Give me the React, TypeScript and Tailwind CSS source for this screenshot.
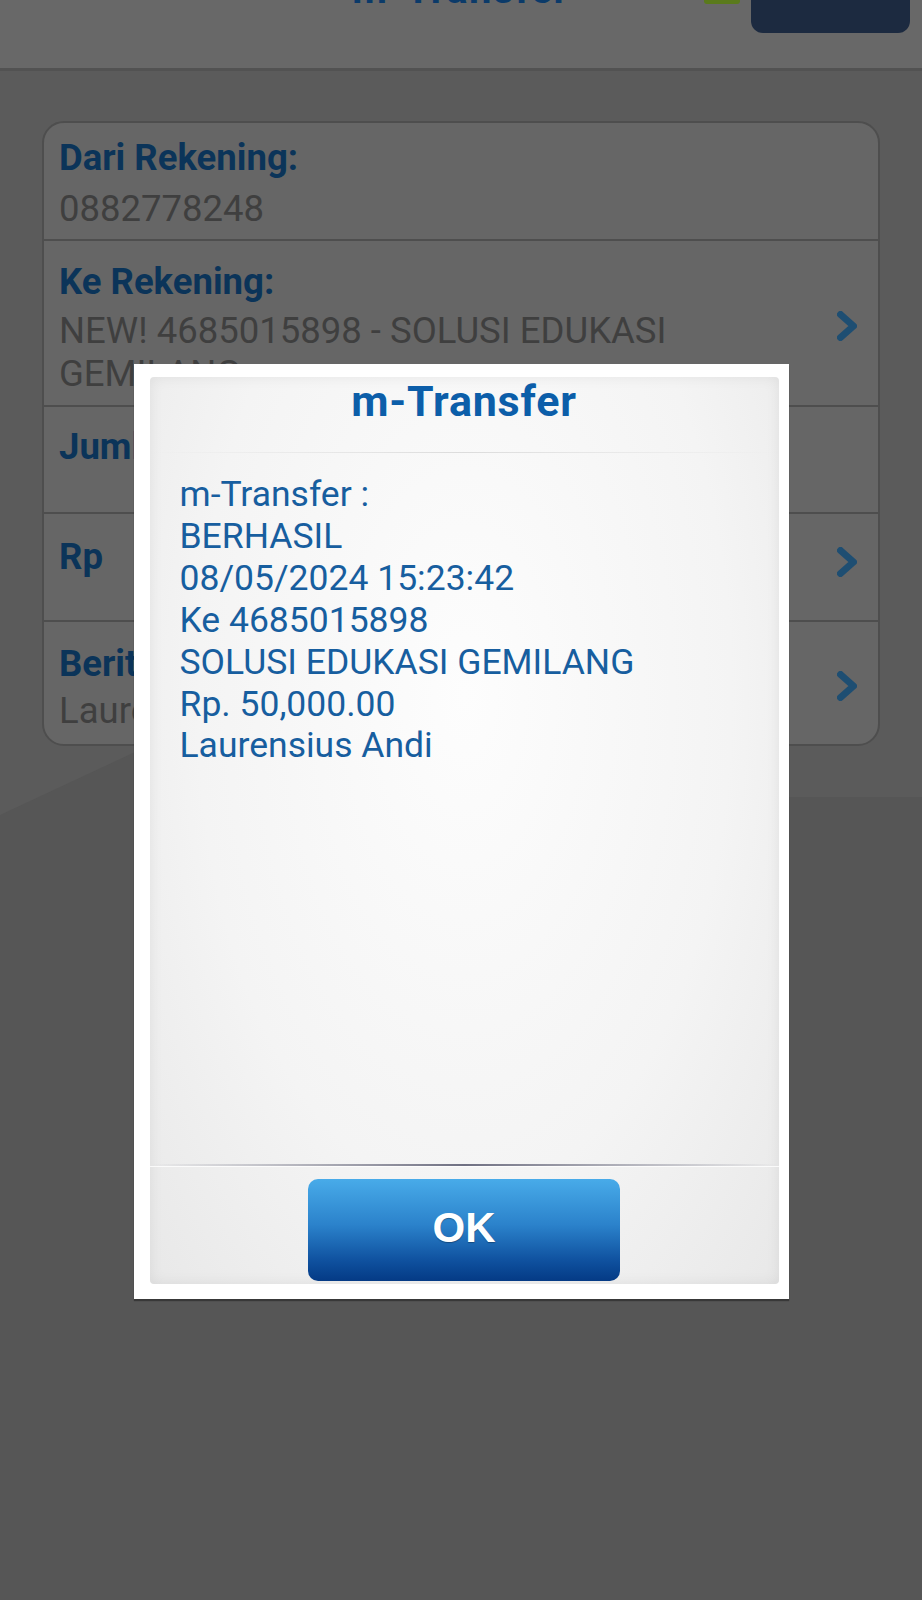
import type { ReactNode } from 'react';

const label = 'font-bold text-[36.5px] leading-[44px] text-[#0b3459]';
const value = 'text-[36.5px] leading-[43px] text-[#3f3f3f]';

const receipt = [
  'm-Transfer :',
  'BERHASIL',
  '08/05/2024 15:23:42',
  'Ke 4685015898',
  'SOLUSI EDUKASI GEMILANG',
  'Rp. 50,000.00',
  'Laurensius Andi',
];

function Chevron({ className = '' }: { className?: string }) {
  return (
    <svg
      width="20"
      height="30"
      viewBox="0 0 20 30"
      fill="none"
      stroke="#1e4e72"
      strokeWidth="7"
      strokeLinecap="round"
      strokeLinejoin="round"
      className={`shrink-0 ${className}`}
    >
      <polyline points="3.5,3.5 16.5,15 3.5,26.5" />
    </svg>
  );
}

function Row({
  height,
  pad,
  chevron,
  chevronClass,
  children,
}: {
  height: string;
  pad: string;
  chevron?: boolean;
  chevronClass?: string;
  children: ReactNode;
}) {
  return (
    <div className={`flex items-center pl-[15px] pr-[21px] ${height}`}>
      <div className={`flex-1 self-start ${pad}`}>{children}</div>
      {chevron && <Chevron className={chevronClass} />}
    </div>
  );
}

export default function App() {
  return (
    <div className="relative min-h-[1600px] overflow-hidden bg-[#5b5b5b] font-[Roboto,sans-serif]">
      {/* background wave */}
      <svg
        className="absolute left-0 top-0"
        width="922"
        height="1600"
        viewBox="0 0 922 1600"
      >
        <path
          d="M0 815 L150 745 C 320 680, 600 780, 788 797 L922 797 L922 1600 L0 1600 Z"
          fill="#565656"
        />
      </svg>

      <header className="relative flex h-[71px] items-start border-b-[3px] border-[#525252] bg-[#686868] px-[12px]">
        <div className="flex-1" />
        <h1 className="-mt-[30px] text-[40px] font-bold leading-[40px] tracking-[1.5px] text-[#0b3a69]">
          m-Transfer
        </h1>
        <div className="flex flex-1 items-start justify-end">
          <div className="-mt-[26px] mr-[11px] h-[30px] w-[36px] rounded-[3px] bg-[#5a7a1c]" />
          <button className="-mt-[27px] flex h-[60px] w-[159px] items-start justify-center rounded-[12px] bg-[#1c2a40] pt-[1px] text-[30px] font-medium leading-[30px] text-[#8f8f8f]">
            Kirim
          </button>
        </div>
      </header>

      <main className="relative px-[42px] pt-[50px]">
        <div className="divide-y-2 divide-[#4e4e4e] rounded-[22px] border-2 border-[#4e4e4e] bg-[#666666]">
          <Row height="h-[118px]" pad="pt-[13px]">
            <p className={label}>Dari Rekening:</p>
            <p className={`mt-[7px] ${value}`}>0882778248</p>
          </Row>
          <Row
            height="h-[166px]"
            pad="pt-[19px] pr-[30px]"
            chevron
            chevronClass="mt-[6px]"
          >
            <p className={label}>Ke Rekening:</p>
            <p className={`mt-[5px] max-w-[700px] ${value}`}>
              NEW! 4685015898 - SOLUSI EDUKASI GEMILANG
            </p>
          </Row>
          <Row height="h-[107px]" pad="pt-[18px]">
            <p className={label}>Jumlah:</p>
          </Row>
          <Row
            height="h-[108px]"
            pad="pt-[21px]"
            chevron
            chevronClass="-mt-[10px]"
          >
            <p className={label}>Rp</p>
          </Row>
          <Row
            height="h-[122px]"
            pad="pt-[20px]"
            chevron
            chevronClass="mt-[6px]"
          >
            <p className={label}>Berita:</p>
            <p className={`mt-[3px] ${value}`}>Laurensius Andi</p>
          </Row>
        </div>
      </main>

      <div className="absolute inset-0 flex items-start justify-center pt-[364px]">
        <div className="h-[935px] w-[655px] bg-white pb-[15px] pl-[16px] pr-[10px] pt-[13px] shadow-[0_2px_1px_rgba(0,0,0,0.35)]">
          <div className="flex h-full flex-col rounded-[4px] bg-[radial-gradient(ellipse_at_50%_35%,#fdfdfd_0%,#f4f4f4_60%,#e8e8e8_100%)] shadow-[inset_0_0_14px_rgba(0,0,0,0.07)]">
            <h2 className="text-center text-[43px] font-bold leading-[48px] tracking-[0.8px] text-[#0c5ea9]">
              m-Transfer
            </h2>
            <div className="mt-[27px] h-px bg-linear-to-r from-transparent via-[#dcdcdc] to-transparent" />
            <div className="mt-[21px] flex-1 pl-[30px] text-[35.5px] leading-[41.9px] text-[#175e9f]">
              {receipt.map((line) => (
                <p key={line}>{line}</p>
              ))}
            </div>
            <div className="h-[2px] bg-linear-to-r from-transparent via-[#6f7082] to-transparent" />
            <div className="h-px bg-white/80" />
            <div className="flex justify-center pb-[3px] pt-[12px]">
              <button className="h-[102px] w-[312px] rounded-[10px] bg-[linear-gradient(to_bottom,#48abe9_0%,#2b82cb_45%,#0f519f_80%,#043a85_100%)] pb-[6px] font-['Liberation_Sans',Arial,sans-serif] text-[42px] font-bold text-white [text-shadow:0_1px_1px_rgba(0,0,0,0.3)]">
                OK
              </button>
            </div>
          </div>
        </div>
      </div>
    </div>
  );
}
